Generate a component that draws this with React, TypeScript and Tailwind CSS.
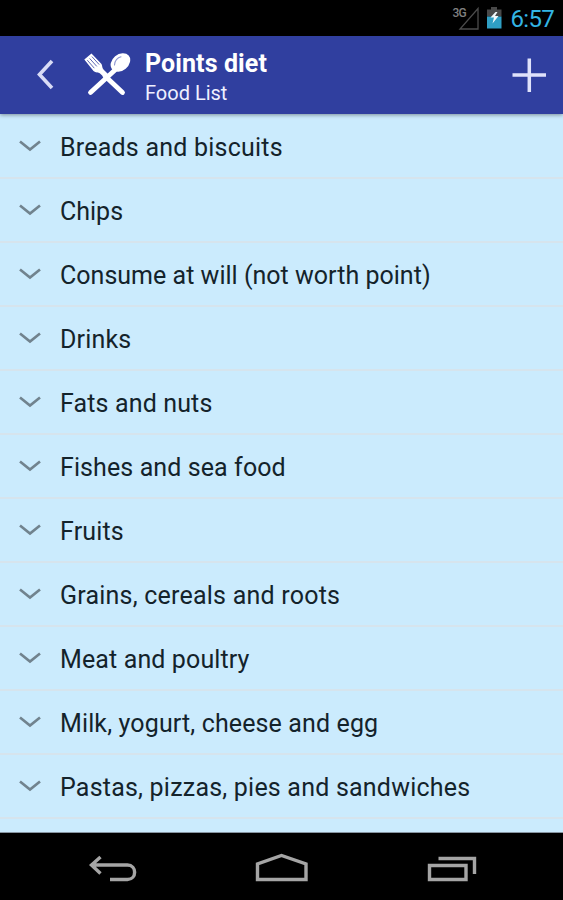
const foods = [
  { name: 'Breads and biscuits', tracking: 'tracking-[0.22px]' },
  { name: 'Chips', tracking: 'tracking-normal' },
  { name: 'Consume at will (not worth point)', tracking: 'tracking-[0.02px]' },
  { name: 'Drinks', tracking: 'tracking-[0.16px]' },
  { name: 'Fats and nuts', tracking: 'tracking-[0.14px]' },
  { name: 'Fishes and sea food', tracking: 'tracking-[0.1px]' },
  { name: 'Fruits', tracking: 'tracking-[0.14px]' },
  { name: 'Grains, cereals and roots', tracking: 'tracking-[0.22px]' },
  { name: 'Meat and poultry', tracking: 'tracking-[0.12px]' },
  { name: 'Milk, yogurt, cheese and egg', tracking: 'tracking-[0.13px]' },
  { name: 'Pastas, pizzas, pies and sandwiches', tracking: 'tracking-[0.21px]' },
];

function StatusBar() {
  return (
    <div className="flex h-9 shrink-0 items-center justify-end bg-black pr-[9px]">
      <svg className="mr-[7px] h-9 w-[28px]" viewBox="452 0 28 36" fill="none">
        <text x="452.500" y="17" fontSize="12" fontWeight="500" letterSpacing="-0.8" fill="#808080" fontFamily="Roboto, sans-serif">3G</text>
        <path d="M478 8.500V29H460L478 8.500Z" stroke="#4c4c4c" strokeWidth="1.300" />
      </svg>
      <svg className="mr-[9px] h-9 w-[15px]" viewBox="487 0 15 36">
        <path d="M491 7h6v2.500h4.500V16.500h-14.500V9.500h4z" fill="#494949" />
        <path d="M487 16.500h14.500v12H487z" fill="#2f9fc4" />
        <path d="M495.500 12l-5 5.500h3.500l-1.500 6 6-7.500h-3.500l2.500-4z" fill="#f2f8fa" />
      </svg>
      <span className="pt-[2px] text-[24px] leading-[34px] tracking-[-0.7px] text-[#33b5e5]">6:57</span>
    </div>
  );
}

function CutleryIcon() {
  return (
    <svg className="h-[46px] w-[48px]" viewBox="83 52 48 46" fill="none">
      <ellipse cx="120.400" cy="62.500" rx="10.800" ry="8.200" transform="rotate(-40 120.400 62.500)" fill="#fff" />
      <path d="M114.500 65C114.500 61 117.500 57.500 121 56.800" stroke="#8f98d2" strokeWidth="1.100" strokeLinecap="round" />
      <path d="M115 70L90.500 92.500" stroke="#fff" strokeWidth="4.800" strokeLinecap="round" />
      <path d="M84.300 59.500L91.500 53.500L101.500 64C102.500 66 102 68 103.500 69.500L109.500 75.500L106 79L100 73.500C98.500 72 95.500 73 93.500 71Z" fill="#fff" />
      <path d="M87.300 60.200L94.300 68.200M89.600 58.400L96.800 66.400M91.900 56.600L99.200 64.600" stroke="#5f69b5" strokeWidth="1" />
      <path d="M105 76L122.500 92.500" stroke="#fff" strokeWidth="4.800" strokeLinecap="round" />
    </svg>
  );
}

function Header() {
  return (
    <header className="z-10 flex h-[78px] shrink-0 items-center bg-[#303f9f] pr-[16px] pl-[35px] text-white shadow-[0_1px_4px_rgba(0,0,0,0.4)]">
      <svg className="h-[34px] w-5" viewBox="35 58 20 34" fill="none">
        <path d="M52 61L39.500 74.500L52 88" stroke="#d9dcf6" strokeWidth="3.600" />
      </svg>
      <div className="ml-7">
        <CutleryIcon />
      </div>
      <div className="ml-[14px] flex flex-1 flex-col pt-[5px]">
        <h1 className="text-[25px] leading-[31px] font-bold tracking-[0.1px] whitespace-nowrap">Points diet</h1>
        <p className="text-[20px] leading-[28px] text-[#eef0ff]">Food List</p>
      </div>
      <svg className="h-9 w-9" viewBox="511 57 36 36" fill="none">
        <path d="M529.300 58.500V92M512.500 75H546" stroke="#dfe2fb" strokeWidth="3.500" />
      </svg>
    </header>
  );
}

function FoodRow({ name, tracking }: { name: string; tracking: string }) {
  return (
    <li className="flex h-16 shrink-0 items-center border-b-2 border-[#d6e4ed] pl-[18px]">
      <svg className="h-4 w-6" viewBox="18 138 24 16" fill="none">
        <path d="M20 141.500L30 149.500L40 141.500" stroke="#71838e" strokeWidth="2.700" />
      </svg>
      <span className={`ml-[18px] pt-[3px] text-[25px] leading-[32px] whitespace-nowrap text-[#14232b] ${tracking}`}>{name}</span>
    </li>
  );
}

function NavigationBar() {
  return (
    <nav className="flex h-[67px] shrink-0 items-center justify-between bg-black pr-[85px] pl-[88px]">
      <svg className="h-[67px] w-[50px]" viewBox="88 833 50 67" fill="none" stroke="#a5a5a5" strokeWidth="3.400">
        <path d="M100.500 857L91.500 865L100.500 873.500M92 865H127.500C137 865 137 879.500 127.500 879.500H110" />
      </svg>
      <svg className="h-[67px] w-[54px]" viewBox="255 833 54 67" fill="none" stroke="#a5a5a5" strokeWidth="3.400">
        <path d="M257.500 879.500V864L281.500 855.500L306 864V879.500Z" />
      </svg>
      <svg className="h-[67px] w-[52px]" viewBox="426 833 52 67" fill="none" stroke="#a5a5a5" strokeWidth="3.400">
        <path d="M429.500 865.500H466V879.500H429.500ZM438.500 858.500H474.500V874" />
      </svg>
    </nav>
  );
}

export default function App() {
  return (
    <div className="flex h-[900px] w-[563px] flex-col overflow-hidden bg-[#cbebfd] font-['Roboto',sans-serif]">
      <StatusBar />
      <Header />
      <ul className="flex min-h-0 flex-1 flex-col overflow-hidden border-b border-[#8795a1] pt-px">
        {foods.map((food) => (
          <FoodRow key={food.name} name={food.name} tracking={food.tracking} />
        ))}
      </ul>
      <NavigationBar />
    </div>
  );
}
